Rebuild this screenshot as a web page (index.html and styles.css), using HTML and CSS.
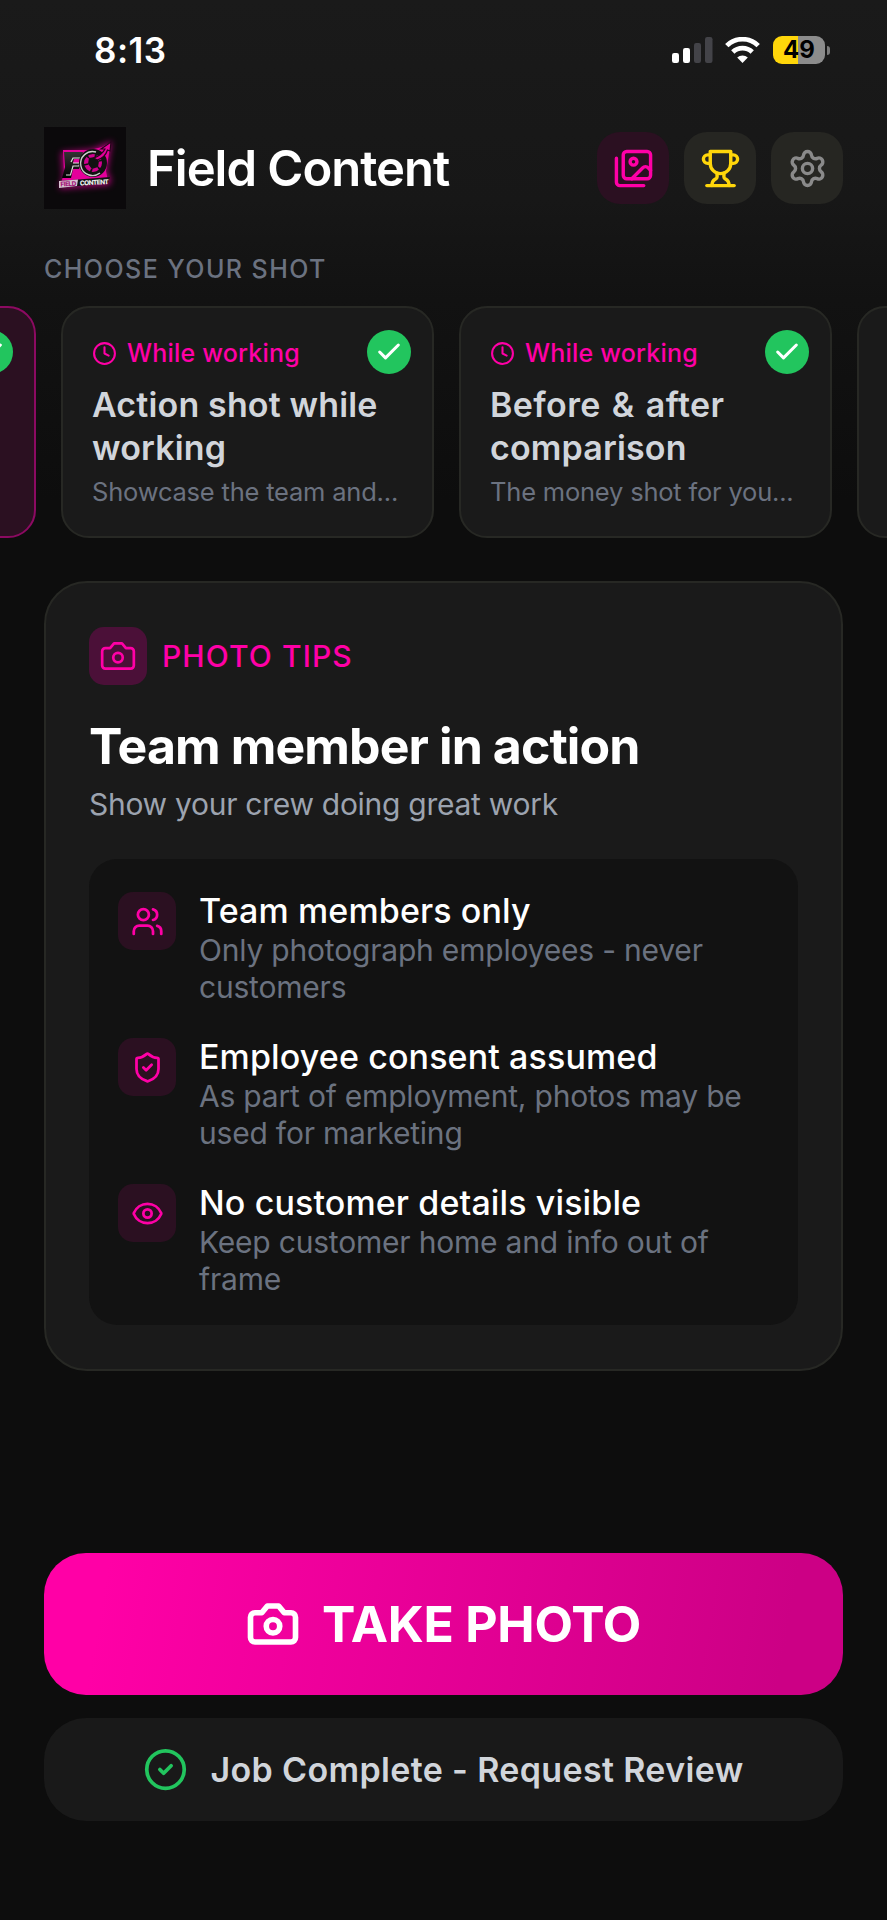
FILE: index.html
```html
<!DOCTYPE html>
<html lang="en">
<head>
    <meta charset="UTF-8">
    <title>Field Content</title>
    <link rel="stylesheet" href="styles.css">
</head>
<body>
<div class="app">

    <!-- status bar -->
    <div class="status">
        <span class="time">8:13</span>
        <div class="status-icons">
            <svg width="41" height="26" viewBox="0 0 41 26">
                <rect x="0" y="16" width="7" height="10" rx="2.2" fill="#fff"/>
                <rect x="11" y="11" width="7" height="15" rx="2.2" fill="#fff"/>
                <rect x="22" y="6" width="7" height="20" rx="2.2" fill="#434348"/>
                <rect x="33" y="0" width="7.5" height="26" rx="2.2" fill="#434348"/>
            </svg>
            <svg class="wifi" width="35" height="26" viewBox="0 0 35 26">
                <g fill="none" stroke="#fff" stroke-width="4.8">
                    <path d="M1.8 8.6a22.5 22.5 0 0 1 31.4 0"/>
                    <path d="M7.8 15.1a14 14 0 0 1 19.4 0"/>
                </g>
                <path d="M17.5 26l-5.3-5.5a7.7 7.7 0 0 1 10.6 0z" fill="#fff"/>
            </svg>
            <div class="battery"><span>49</span></div>
            <i class="battery-cap"></i>
        </div>
    </div>

    <!-- header -->
    <header class="header">
        <svg class="logo" width="82" height="82" viewBox="0 0 82 82">
            <defs>
                <filter id="glow" x="-30%" y="-30%" width="160%" height="160%">
                    <feGaussianBlur stdDeviation="3"/>
                </filter>
                <linearGradient id="chrome" x1="0" y1="0" x2="0" y2="1">
                    <stop offset="0" stop-color="#333"/>
                    <stop offset="1" stop-color="#000"/>
                </linearGradient>
            </defs>
            <rect width="82" height="82" fill="#0b090b"/>
            <path d="M17 25L48 22L68 14L63 45L67 51L66 58L15 62L19 50Z" fill="#e00098" filter="url(#glow)" opacity=".7"/>
            <path d="M19 23L46 23L58 20L67 15L62 44L64 54L16 60L20 46Z" fill="#e5009b"/>
            <path d="M20 25H39L37 32H30L29 36H37L35 42H29L27 51H18L21 40Z" fill="url(#chrome)"/>
            <path d="M22 48H26.500L29 39H35L36 36H29M27 35L29 31H37" fill="none" stroke="#ddd" stroke-width="1.200"/>
            <circle cx="49" cy="36" r="11.500" fill="#d10090" stroke="#111" stroke-width="5"/>
            <path d="M56 46A12 12 0 1 1 52 25" fill="none" stroke="#ccc" stroke-width="1.400"/>
            <path d="M45 31l6-1 4 4-1 6-6 2-4-5z" fill="#111"/>
            <path d="M45 31l-3-3M51 30l2-4M55 34l4-1M54 40l3 4M48 42l-2 4M44 37l-4 1" stroke="#111" stroke-width="1.700"/>
            <path d="M50 31Q58 28 61 22L57 22L67 15L66 24L63.500 23Q61 31 53 33Z" fill="#e5009b" stroke="#26051b" stroke-width="1.200"/>
            <path d="M15 54L66 50L64 56L15 61Z" fill="#111"/>
            <path d="M15 54L34 52.500L33 59L15 61Z" fill="#d8c4d2"/>
            <g transform="rotate(-3 16 59)" class="logo-text">
                <text x="16.500" y="59.500" textLength="16" fill="#a3187a">FIELD</text>
                <text x="36" y="59.500" textLength="29" fill="#eee">CONTENT</text>
            </g>
        </svg>
        <h1>Field Content</h1>
        <nav class="actions">
            <a class="action action-pink">
                <svg class="icon" width="41" height="41" viewBox="0 0 24 24">
                    <path d="M18 22H4a2 2 0 0 1-2-2V6"/>
                    <path d="m22 13-1.296-1.296a2.410 2.410 0 0 0-3.408 0L11 18"/>
                    <circle cx="12" cy="8" r="2"/>
                    <rect x="6" y="2" width="16" height="16" rx="2"/>
                </svg>
            </a>
            <a class="action action-gold">
                <svg class="icon" width="41" height="41" viewBox="0 0 24 24">
                    <path d="M6 9H4.500a2.500 2.500 0 0 1 0-5H6"/>
                    <path d="M18 9h1.500a2.500 2.500 0 0 0 0-5H18"/>
                    <path d="M4 22h16"/>
                    <path d="M10 14.660V17c0 .55-.47.98-.97 1.210C7.850 18.750 7 20.240 7 22"/>
                    <path d="M14 14.660V17c0 .55.47.98.97 1.210C16.150 18.750 17 20.240 17 22"/>
                    <path d="M18 2H6v7a6 6 0 0 0 12 0V2Z"/>
                </svg>
            </a>
            <a class="action">
                <svg class="icon" width="41" height="41" viewBox="0 0 24 24">
                    <path d="M9.671 4.136a2.340 2.340 0 0 1 4.659 0 2.340 2.340 0 0 0 3.319 1.915 2.340 2.340 0 0 1 2.330 4.033 2.340 2.340 0 0 0 0 3.831 2.340 2.340 0 0 1-2.330 4.033 2.340 2.340 0 0 0-3.319 1.915 2.340 2.340 0 0 1-4.659 0 2.340 2.340 0 0 0-3.320-1.915 2.340 2.340 0 0 1-2.330-4.033 2.340 2.340 0 0 0 0-3.831A2.340 2.340 0 0 1 6.350 6.051a2.340 2.340 0 0 0 3.319-1.915"/>
                    <circle cx="12" cy="12" r="3"/>
                </svg>
            </a>
        </nav>
    </header>

    <!-- shot picker, scrolled one card to the left -->
    <h2 class="label">CHOOSE YOUR SHOT</h2>
    <div class="shots">
        <div class="shot shot-active">
            <span class="done">
                <svg class="icon" width="28" height="28" viewBox="0 0 24 24"><path d="M20 6 9 17l-5-5"/></svg>
            </span>
        </div>
        <div class="shot">
            <div class="when">
                <svg class="icon" width="25" height="25" viewBox="0 0 24 24"><circle cx="12" cy="12" r="10"/><path d="M12 6v6l4 2"/></svg>
                While working
            </div>
            <h3>Action shot while<br>working</h3>
            <p>Showcase the team and...</p>
            <span class="done">
                <svg class="icon" width="28" height="28" viewBox="0 0 24 24"><path d="M20 6 9 17l-5-5"/></svg>
            </span>
        </div>
        <div class="shot">
            <div class="when">
                <svg class="icon" width="25" height="25" viewBox="0 0 24 24"><circle cx="12" cy="12" r="10"/><path d="M12 6v6l4 2"/></svg>
                While working
            </div>
            <h3><span class="wide">Before &amp; after</span><br>comparison</h3>
            <p>The money shot for you...</p>
            <span class="done">
                <svg class="icon" width="28" height="28" viewBox="0 0 24 24"><path d="M20 6 9 17l-5-5"/></svg>
            </span>
        </div>
        <div class="shot"></div>
    </div>

    <!-- tips -->
    <section class="tips">
        <div class="tips-head">
            <span class="box box-strong">
                <svg class="icon thin" width="38" height="38" viewBox="0 0 24 24">
                    <path d="M14.500 4h-5L7 7H4a2 2 0 0 0-2 2v9a2 2 0 0 0 2 2h16a2 2 0 0 0 2-2V9a2 2 0 0 0-2-2h-3l-2.500-3z"/>
                    <circle cx="12" cy="13" r="3"/>
                </svg>
            </span>
            <span class="tips-tag">PHOTO TIPS</span>
        </div>
        <h2>Team member in action</h2>
        <p class="lead">Show your crew doing great work</p>

        <ul class="rules">
            <li>
                <span class="box">
                    <svg class="icon" width="33" height="33" viewBox="0 0 24 24">
                        <path d="M16 21v-2a4 4 0 0 0-4-4H6a4 4 0 0 0-4 4v2"/>
                        <circle cx="9" cy="7" r="4"/>
                        <path d="M22 21v-2a4 4 0 0 0-3-3.870"/>
                        <path d="M16 3.130a4 4 0 0 1 0 7.750"/>
                    </svg>
                </span>
                <div>
                    <h4>Team members only</h4>
                    <p>Only photograph employees - never<br>customers</p>
                </div>
            </li>
            <li>
                <span class="box">
                    <svg class="icon" width="33" height="33" viewBox="0 0 24 24">
                        <path d="M20 13c0 5-3.500 7.500-7.660 8.950a1 1 0 0 1-.67-.01C7.500 20.500 4 18 4 13V6a1 1 0 0 1 1-1c2 0 4.500-1.200 6.240-2.720a1.170 1.170 0 0 1 1.520 0C14.510 3.810 17 5 19 5a1 1 0 0 1 1 1z"/>
                        <path d="m9 12 2 2 4-4"/>
                    </svg>
                </span>
                <div>
                    <h4>Employee consent assumed</h4>
                    <p>As part of employment, photos may be<br>used for marketing</p>
                </div>
            </li>
            <li>
                <span class="box">
                    <svg class="icon" width="33" height="33" viewBox="0 0 24 24">
                        <path d="M2.062 12.348a1 1 0 0 1 0-.696 10.750 10.750 0 0 1 19.876 0 1 1 0 0 1 0 .696 10.750 10.750 0 0 1-19.876 0"/>
                        <circle cx="12" cy="12" r="3"/>
                    </svg>
                </span>
                <div>
                    <h4>No customer details visible</h4>
                    <p>Keep customer home and info out of<br>frame</p>
                </div>
            </li>
        </ul>
    </section>

    <!-- bottom buttons -->
    <footer class="footer">
        <a class="btn btn-photo">
            <svg class="icon" width="54" height="54" viewBox="0 0 24 24">
                <path d="M14.500 4h-5L7 7H4a2 2 0 0 0-2 2v9a2 2 0 0 0 2 2h16a2 2 0 0 0 2-2V9a2 2 0 0 0-2-2h-3l-2.500-3z"/>
                <circle cx="12" cy="13" r="3"/>
            </svg>
            <span>TAKE PHOTO</span>
        </a>
        <a class="btn btn-review">
            <svg class="icon" width="45" height="45" viewBox="0 0 24 24">
                <circle cx="12" cy="12" r="10"/>
                <path d="m9 12 2 2 4-4"/>
            </svg>
            <span>Job Complete - Request Review</span>
        </a>
    </footer>
</div>
</body>
</html>
```
FILE: styles.css
```css
* {
    margin: 0;
    padding: 0;
    box-sizing: border-box;
}
body {
    background: #0d0d0d;
    color: #fff;
    font-family: Inter, "Liberation Sans", sans-serif;
}
ul {
    list-style: none;
}
svg {
    display: block;
    flex: none;
}
.app {
    width: 887px;
    height: 1920px;
    overflow: hidden;
    display: flex;
    flex-direction: column;
    background: linear-gradient(#1a1a1a 0, #171717 200px, #121212 300px, #0d0d0d 500px);
}
.icon {
    fill: none;
    stroke: currentColor;
    stroke-width: 2;
    stroke-linecap: round;
    stroke-linejoin: round;
}
.thin {
    stroke-width: 1.7;
}

/* status bar */
.status {
    height: 127px;
    padding: 29px 57px 0 94px;
    display: flex;
    justify-content: space-between;
    align-items: flex-start;
}
.time {
    font-size: 35px;
    line-height: 43px;
    font-weight: 600;
    letter-spacing: 0.5px;
}
.status-icons {
    display: flex;
    align-items: center;
    height: 42px;
}
.wifi {
    margin: 0 13px 0 12px;
}
.battery {
    width: 52px;
    height: 28px;
    border-radius: 9px;
    background: linear-gradient(90deg, #ffd60a 49%, #8c8c8c 49%);
    color: #000;
    font-size: 24px;
    line-height: 28px;
    font-weight: 700;
    text-align: center;
}
.battery-cap {
    width: 3px;
    height: 9px;
    margin-left: 2px;
    border-radius: 0 4px 4px 0;
    background: #7b7b7b;
}

/* header */
.header {
    display: flex;
    align-items: center;
    height: 82px;
    padding: 0 44px;
}
.logo-text {
    font-size: 6.5px;
    font-weight: 800;
}
.header h1 {
    margin-left: 21px;
    padding-top: 2px;
    font-size: 49px;
    line-height: 60px;
    font-weight: 600;
    letter-spacing: -1px;
    white-space: nowrap;
}
.actions {
    display: flex;
    gap: 15px;
    margin-left: auto;
}
.action {
    display: flex;
    align-items: center;
    justify-content: center;
    width: 72px;
    height: 72px;
    border-radius: 23px;
    background: #262622;
    color: #8a8a8a;
}
.action-pink {
    background: #2b1021;
    color: #ff00a6;
}
.action-gold {
    color: #ffd60a;
}

/* shots */
.label {
    margin: 45px 0 22px 44px;
    font-size: 25px;
    line-height: 30px;
    font-weight: 500;
    letter-spacing: 1.45px;
    color: #6b7280;
}
.shots {
    display: flex;
    gap: 25px;
    margin-left: -337px;
}
.shot {
    position: relative;
    flex: none;
    width: 373px;
    height: 232px;
    padding: 28px 29px 0;
    border: 2px solid #272824;
    border-radius: 28px;
    background: #1a1a1a;
}
.shot-active {
    border-color: #8c0a62;
    background: #2b1021;
}
.when {
    display: flex;
    align-items: center;
    gap: 10px;
    height: 34px;
    font-size: 25px;
    font-weight: 500;
    letter-spacing: 0.2px;
    color: #ff00a6;
}
.shot h3 {
    margin: 13px 0 6px;
    font-size: 34px;
    line-height: 43px;
    font-weight: 600;
    letter-spacing: 0.15px;
    color: #d1d5db;
    white-space: nowrap;
}
.wide {
    word-spacing: 2px;
    letter-spacing: 0.4px;
}
.shot p {
    font-size: 25.5px;
    line-height: 34px;
    letter-spacing: -0.2px;
    color: #6b7280;
    white-space: nowrap;
}
.done {
    position: absolute;
    top: 22px;
    right: 21px;
    display: flex;
    align-items: center;
    justify-content: center;
    width: 44px;
    height: 44px;
    border-radius: 50%;
    background: #22c55e;
    color: #fff;
}
.done .icon {
    stroke-width: 2.6;
}

/* tips */
.tips {
    margin: 43px 44px 0;
    height: 790px;
    padding: 44px 43px 0;
    border: 2px solid #272824;
    border-radius: 43px;
    background: #1a1a1a;
}
.tips-head {
    display: flex;
    align-items: center;
    gap: 15px;
}
.box {
    display: flex;
    flex: none;
    align-items: center;
    justify-content: center;
    width: 58px;
    height: 58px;
    border-radius: 15px;
    background: #2b1021;
    color: #ff00a6;
}
.box-strong {
    background: #4b1038;
}
.tips-tag {
    font-size: 30px;
    font-weight: 500;
    letter-spacing: 1.1px;
    color: #ff00a6;
}
.tips h2 {
    margin-top: 31px;
    font-size: 50px;
    line-height: 60px;
    font-weight: 700;
    letter-spacing: -0.9px;
}
.lead {
    margin: 8px 0 35px;
    font-size: 30px;
    line-height: 40px;
    letter-spacing: -0.28px;
    color: #9ca3af;
}
.rules {
    display: flex;
    flex-direction: column;
    gap: 29px;
    height: 466px;
    padding: 29px;
    border-radius: 28px;
    background: #121212;
}
.rules li {
    display: flex;
    gap: 23px;
}
.rules .box {
    margin-top: 4px;
}
.rules h4 {
    padding-top: 1px;
    font-size: 34px;
    line-height: 43px;
    font-weight: 500;
    letter-spacing: 0.12px;
    white-space: nowrap;
}
.rules p {
    font-size: 30px;
    line-height: 36.5px;
    letter-spacing: -0.2px;
    color: #6b7280;
    white-space: nowrap;
}

/* bottom buttons */
.footer {
    display: flex;
    flex-direction: column;
    gap: 23px;
    margin: auto 44px 99px;
}
.btn {
    display: flex;
    align-items: center;
    justify-content: center;
    border-radius: 42px;
    white-space: nowrap;
}
.btn-photo {
    gap: 22px;
    height: 142px;
    background: linear-gradient(100deg, #ff00a6 8%, #cc0085 92%);
    font-size: 50px;
    font-weight: 700;
    letter-spacing: -0.25px;
}
.btn-photo .icon {
    stroke-width: 2.5;
}
.btn-review {
    gap: 22px;
    height: 103px;
    background: #191919;
    font-size: 34px;
    font-weight: 600;
    letter-spacing: 0.35px;
    color: #d1d5db;
}
.btn-review .icon {
    color: #22c55e;
}
```
